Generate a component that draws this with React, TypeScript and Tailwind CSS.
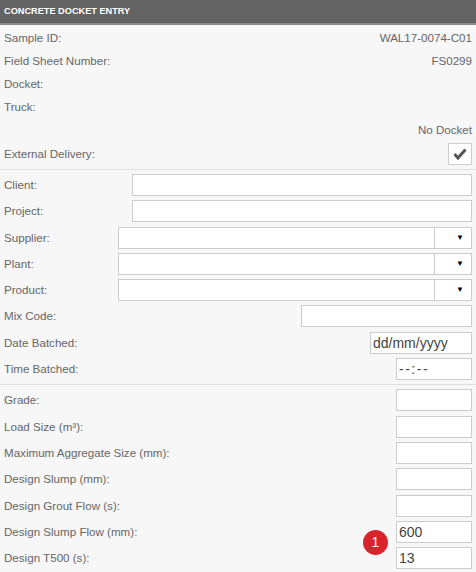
const font = { fontFamily: '"Liberation Sans", Arial, sans-serif' };

const InfoRow = ({ label, value }: { label?: string; value?: string }) => (
  <div className="flex h-[23px] items-center justify-between">
    <span>{label}</span>
    <span>{value}</span>
  </div>
);

const FieldRow = ({ label, children }: { label: string; children: React.ReactNode }) => (
  <div className="flex h-[26.3px] items-start justify-between">
    <span className="leading-[22px]">{label}</span>
    {children}
  </div>
);

const Box = ({ w, text, big }: { w: string; text?: string; big?: boolean }) => (
  <div
    className={`h-[22px] ${w} border border-[#cccccc] bg-white px-[2px] text-[#444] leading-[20px] ${
      big ? 'text-[14px]' : 'text-[13px]'
    }`}
  >
    {text}
  </div>
);

const Select = () => (
  <div className="flex h-[22px] w-[354px] border border-[#cccccc] bg-white">
    <div className="flex-1" />
    <div className="flex w-[37px] items-center justify-end border-l border-[#cccccc] pr-[7px] text-[8px] text-black">
      ▼
    </div>
  </div>
);

export default function App() {
  return (
    <div style={font} className="h-[572px] w-[476px] overflow-hidden bg-[#f7f7f7] text-[11.6px] text-[#666]">
      <div className="flex h-[25px] items-center border-b-2 border-[#8c8c8c] bg-[#636363] px-[4px] text-[9.2px] font-bold text-white">
        CONCRETE DOCKET ENTRY
      </div>

      <div className="px-[4px] pt-[1px]">
        <InfoRow label="Sample ID:" value="WAL17-0074-C01" />
        <InfoRow label="Field Sheet Number:" value="FS0299" />
        <InfoRow label="Docket:" />
        <InfoRow label="Truck:" />
        <InfoRow value="No Docket" />
        <div className="flex items-center justify-between pb-[4px] pt-[2px]">
          <span>External Delivery:</span>
          <div className="flex h-[22px] w-[24px] items-center justify-center border border-[#cccccc] bg-white">
            <svg width="14" height="12" viewBox="0 0 14 12">
              <path d="M1.5 6 L5 10 L12.5 1.5" fill="none" stroke="#555" strokeWidth="3" />
            </svg>
          </div>
        </div>
      </div>

      <div className="border-t border-[#e0e0e0] px-[4px] pt-[4px]">
        <FieldRow label="Client:">
          <Box w="w-[340px]" />
        </FieldRow>
        <FieldRow label="Project:">
          <Box w="w-[340px]" />
        </FieldRow>
        <FieldRow label="Supplier:">
          <Select />
        </FieldRow>
        <FieldRow label="Plant:">
          <Select />
        </FieldRow>
        <FieldRow label="Product:">
          <Select />
        </FieldRow>
        <FieldRow label="Mix Code:">
          <Box w="w-[171px]" />
        </FieldRow>
        <FieldRow label="Date Batched:">
          <Box w="w-[102px]" text="dd/mm/yyyy" big />
        </FieldRow>
        <FieldRow label="Time Batched:">
          <div className="h-[22px] w-[76px] border border-[#cccccc] bg-white px-[2px] text-[14px] leading-[20px] tracking-[1.5px] text-[#444]">
            --:--
          </div>
        </FieldRow>
      </div>

      <div className="border-t border-[#e0e0e0] px-[4px] pt-[4px]">
        <FieldRow label="Grade:">
          <Box w="w-[76px]" />
        </FieldRow>
        <FieldRow label="Load Size (m³):">
          <Box w="w-[76px]" />
        </FieldRow>
        <FieldRow label="Maximum Aggregate Size (mm):">
          <Box w="w-[76px]" />
        </FieldRow>
        <FieldRow label="Design Slump (mm):">
          <Box w="w-[76px]" />
        </FieldRow>
        <FieldRow label="Design Grout Flow (s):">
          <Box w="w-[76px]" />
        </FieldRow>
        <FieldRow label="Design Slump Flow (mm):">
          <Box w="w-[76px]" text="600" big />
        </FieldRow>
        <FieldRow label="Design T500 (s):">
          <div className="relative">
            <div className="absolute right-[calc(100%+8px)] top-[-17px] flex h-[25px] w-[25px] items-center justify-center rounded-full bg-[#d9232d] text-[14px] text-white">
              1
            </div>
            <Box w="w-[76px]" text="13" big />
          </div>
        </FieldRow>
      </div>
    </div>
  );
}
